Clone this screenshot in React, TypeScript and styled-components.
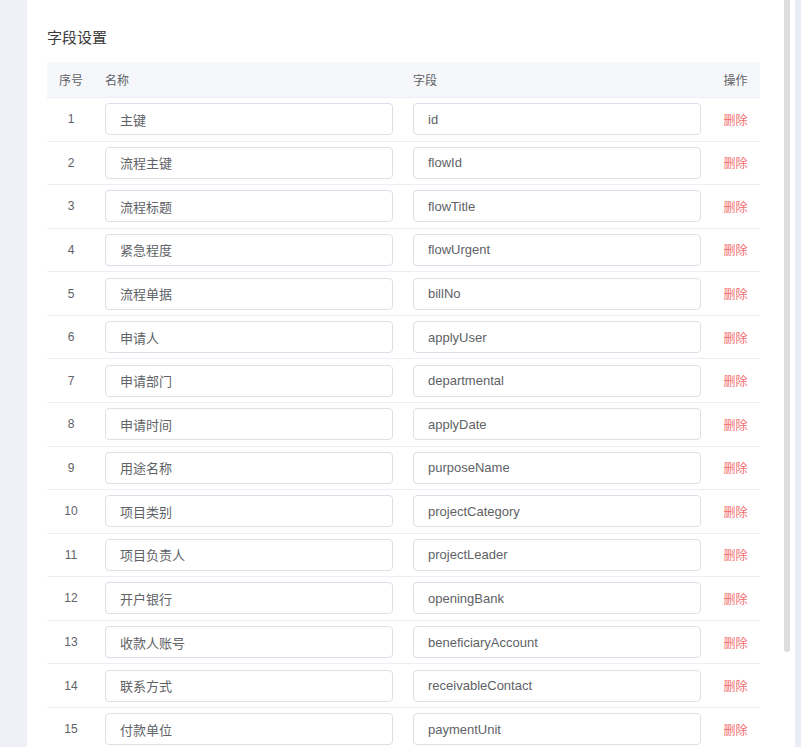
import React from "react";
import styled, { createGlobalStyle } from "styled-components";

const Global = createGlobalStyle`
  html, body { margin: 0; padding: 0; height: 100%; overflow: hidden; }
  body {
    font-family: "Liberation Sans", "Noto Sans CJK SC", sans-serif;
    background: #eef0f6;
  }
  * { box-sizing: border-box; }
`;

const Page = styled.div`
  display: grid;
  grid-template-columns: 27px 768px 6px;
  height: 747px;
`;

const SideStrip = styled.div<{ $color: string }>`
  background: ${(p) => p.$color};
`;

const Panel = styled.div`
  position: relative;
  background: #fff;
  padding-right: 5px;
  height: 747px;
`;

const Scroller = styled.div`
  height: 747px;
  overflow: hidden;
  padding: 26px 24px 60px 20px;
`;

const ScrollThumb = styled.div`
  position: absolute;
  top: 0;
  right: 5px;
  width: 6px;
  height: 652px;
  background: #dddddd;
  border-radius: 0 0 3px 3px;
`;

const Title = styled.h3`
  margin: 0 0 12px 0;
  font-size: 15px;
  line-height: 24px;
  font-weight: normal;
  color: #3a3a3a;
`;

const Table = styled.div`
  display: grid;
  grid-template-columns: 48px 308px 308px 49px;
  width: 713px;
`;

const HeadCell = styled.div<{ $center?: boolean }>`
  height: 36px;
  display: flex;
  align-items: center;
  justify-content: ${(p) => (p.$center ? "center" : "flex-start")};
  padding: 0 ${(p) => (p.$center ? "0" : "10px")};
  background: #f5f7fa;
  border-bottom: 1px solid #ebeef5;
  font-size: 12px;
  color: #606266;
`;

const Cell = styled.div<{ $center?: boolean }>`
  height: 43.57px;
  display: flex;
  align-items: center;
  justify-content: ${(p) => (p.$center ? "center" : "flex-start")};
  padding: 0 ${(p) => (p.$center ? "0" : "10px")};
  border-bottom: 1px solid #ebeef5;
  font-size: 12px;
  color: #606266;
`;

const Input = styled.input`
  width: 288px;
  height: 32px;
  border: 1px solid #dcdfe6;
  border-radius: 4px;
  padding: 0 14px;
  font-family: inherit;
  font-size: 13px;
  color: #606266;
  outline: none;
  background: #fff;
`;

const DeleteLink = styled.span`
  color: #f56c6c;
  font-size: 12px;
  cursor: pointer;
`;

const rows: [string, string][] = [
  ["主键", "id"],
  ["流程主键", "flowId"],
  ["流程标题", "flowTitle"],
  ["紧急程度", "flowUrgent"],
  ["流程单据", "billNo"],
  ["申请人", "applyUser"],
  ["申请部门", "departmental"],
  ["申请时间", "applyDate"],
  ["用途名称", "purposeName"],
  ["项目类别", "projectCategory"],
  ["项目负责人", "projectLeader"],
  ["开户银行", "openingBank"],
  ["收款人账号", "beneficiaryAccount"],
  ["联系方式", "receivableContact"],
  ["付款单位", "paymentUnit"],
];

export default function App() {
  return (
    <>
      <Global />
      <Page>
        <SideStrip $color="#eef0f6" />
        <Panel>
          <Scroller>
            <Title>字段设置</Title>
            <Table>
              <HeadCell $center>序号</HeadCell>
              <HeadCell>名称</HeadCell>
              <HeadCell>字段</HeadCell>
              <HeadCell $center>操作</HeadCell>
              {rows.map(([name, field], i) => (
                <React.Fragment key={field}>
                  <Cell $center>{i + 1}</Cell>
                  <Cell>
                    <Input defaultValue={name} />
                  </Cell>
                  <Cell>
                    <Input defaultValue={field} />
                  </Cell>
                  <Cell $center>
                    <DeleteLink>删除</DeleteLink>
                  </Cell>
                </React.Fragment>
              ))}
            </Table>
          </Scroller>
          <ScrollThumb />
        </Panel>
        <SideStrip $color="#e9edf5" />
      </Page>
    </>
  );
}
